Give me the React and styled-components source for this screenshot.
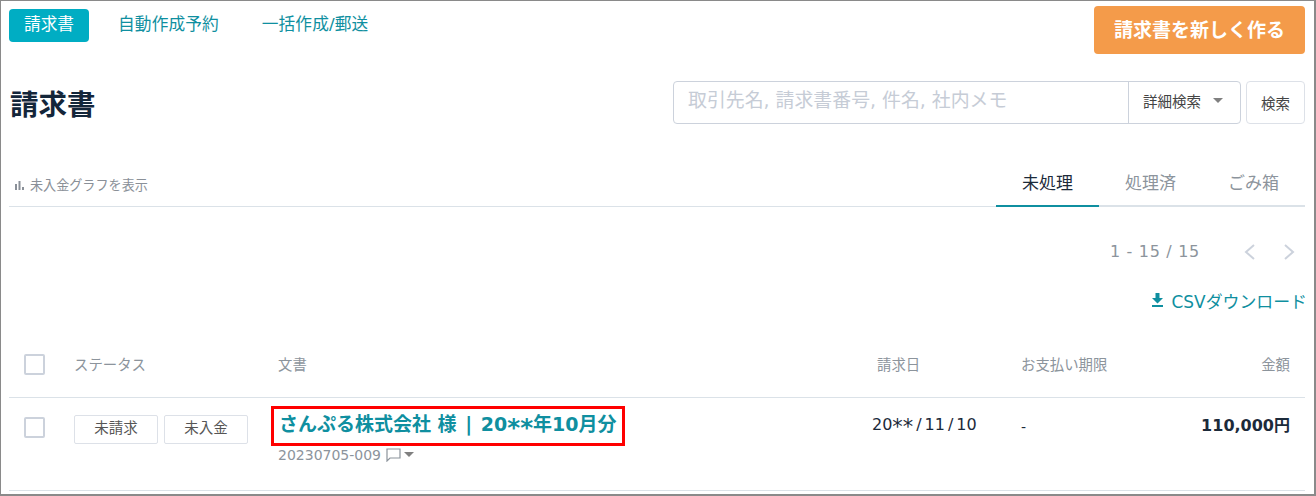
import React from "react";
import styled, { createGlobalStyle } from "styled-components";

const GlobalStyle = createGlobalStyle`
  html, body { margin: 0; padding: 0; background: #fff; }
  body { font-family: "DejaVu Sans", "Noto Sans CJK JP", sans-serif; color: #1c2a3a; }
  * { box-sizing: border-box; }
`;

const teal = "#0f8fa0";
const fontStack = `"DejaVu Sans", "Noto Sans CJK JP", sans-serif`;

const Frame = styled.div`
  width: 1316px;
  height: 496px;
  border: 1px solid #8a8a8a;
  border-width: 1px 2px 2px 1px;
  padding: 0 9px 0 8px;
  overflow: hidden;
`;

const TopBar = styled.div`
  display: flex;
  justify-content: space-between;
  align-items: flex-start;
  padding-top: 5px;
  height: 80px;
`;

const SubNav = styled.nav`
  display: flex;
  align-items: center;
  margin-top: 3px;
`;

const SubNavItem = styled.a`
  height: 33px;
  line-height: 30px;
  font-size: 16.7px;
  letter-spacing: ${(p) => (p.$active ? "0" : "0.1px")};
  border-radius: 4px;
  white-space: nowrap;
  padding: 0 ${(p) => (p.$active ? "15px" : "0")};
  margin-right: ${(p) => (p.$active ? "29px" : "43px")};
  color: ${(p) => (p.$active ? "#fff" : teal)};
  background: ${(p) => (p.$active ? "#00adc3" : "transparent")};
`;

const NewButton = styled.button`
  width: 211px;
  height: 48px;
  border: 0;
  border-radius: 4px;
  background: #f49b4a;
  color: #fff;
  font: bold 19px ${fontStack};
  padding: 0 0 4px;
`;

const TitleRow = styled.div`
  display: flex;
  justify-content: space-between;
  align-items: flex-start;
  height: 81px;
`;

const Title = styled.h1`
  margin: 0;
  padding: 3px 0 0 1px;
  font-size: 28.5px;
  line-height: 44px;
  font-weight: 700;
  color: #14263a;
`;

const SearchArea = styled.div`
  display: flex;
  gap: 5px;
`;

const SearchBox = styled.div`
  display: flex;
  width: 568px;
  height: 43px;
  border: 1px solid #ccd2dc;
  border-radius: 4px;
`;

const SearchHint = styled.div`
  flex: 1;
  padding-left: 14px;
  line-height: 37px;
  font-size: 18.9px;
  color: #c6ccd6;
  white-space: nowrap;
`;

const DetailSearch = styled.div`
  width: 112px;
  border-left: 1px solid #ccd2dc;
  display: flex;
  align-items: center;
  padding: 0 0 5px 14px;
  font-size: 14.5px;
  color: #444;
  white-space: nowrap;
`;

const Caret = styled.span`
  display: inline-block;
  border-left: ${(p) => p.$size}px solid transparent;
  border-right: ${(p) => p.$size}px solid transparent;
  border-top: ${(p) => p.$size}px solid #808080;
  margin-left: ${(p) => p.$gap}px;
`;

const SearchButton = styled.button`
  width: 59px;
  height: 43px;
  border: 1px solid #dde1e8;
  border-radius: 4px;
  background: #fff;
  color: #444;
  font: 14.5px ${fontStack};
  padding: 0;
`;

const TabRow = styled.div`
  display: flex;
  justify-content: space-between;
  align-items: flex-end;
  height: 45px;
  border-bottom: 1px solid #dbe2e8;
`;

const GraphToggle = styled.div`
  display: flex;
  align-items: center;
  gap: 5px;
  padding: 0 0 12px 6px;
  font-size: 13.1px;
  color: #8a9098;
`;

const Tabs = styled.div`
  display: flex;
  margin-bottom: -1px;
`;

const Tab = styled.div`
  width: ${(p) => p.$w}px;
  height: 45px;
  line-height: 42px;
  text-align: center;
  font-size: 17px;
  color: ${(p) => (p.$active ? "#1c2a3a" : "#8c949c")};
  border-bottom: 2px solid ${(p) => (p.$active ? teal : "#dbe2e8")};
`;

const Pager = styled.div`
  display: flex;
  justify-content: flex-end;
  align-items: center;
  height: 41px;
  margin-top: 24px;
  padding-right: 10px;
  gap: 27px;
  color: #8c949c;
  font-size: 16px;
`;

const PagerCount = styled.span`
  margin-right: 17px;
  letter-spacing: 0.7px;
`;

const CsvRow = styled.div`
  display: flex;
  justify-content: flex-end;
  align-items: center;
  gap: 8px;
  height: 34px;
  margin-top: 11px;
  margin-right: -2px;
  font-size: 16.9px;
  color: ${teal};
`;

const Row = styled.div`
  display: grid;
  grid-template-columns: 65px 204px 599px 144px 1fr 120px;
  border-bottom: 1px solid #dbe2e8;
  height: ${(p) => p.$h}px;
  align-items: ${(p) => (p.$head ? "center" : "start")};
  padding-top: ${(p) => (p.$head ? 14 : 0)}px;
`;

const HeadCell = styled.div`
  font-size: 14.4px;
  color: #8c949c;
  text-align: ${(p) => (p.$right ? "right" : "left")};
  padding-right: ${(p) => (p.$right ? 15 : 0)}px;
  white-space: nowrap;
  margin-top: -2px;
`;

const Check = styled.div`
  width: 21px;
  height: 21px;
  margin-left: 15px;
  border: 2px solid #ccd2dc;
  border-radius: 2px;
  background: #fff;
  margin-top: ${(p) => p.$top || 0}px;
`;

const Badges = styled.div`
  display: flex;
  gap: 6px;
  margin-top: 17px;
`;

const Badge = styled.span`
  width: 84px;
  height: 29px;
  border: 1px solid #dde1e8;
  border-radius: 2px;
  text-align: center;
  line-height: 25px;
  font-size: 14.5px;
  color: #555;
`;

const DocCell = styled.div`
  margin-left: -7px;
  margin-top: 8px;
`;

const DocTitle = styled.a`
  display: inline-block;
  height: 40px;
  border: 3px solid #f00;
  padding: 0 5px;
  line-height: 31px;
  font-size: 19px;
  font-weight: 700;
  color: ${teal};
  white-space: nowrap;
`;

// Latin marks run wider in the reference font than in DejaVu
const Wide = styled.span`
  padding: 0 ${(p) => p.$by}px;
`;

const Stars = styled.span`
  font-size: 1.3em;
  line-height: 0;
  vertical-align: -0.2em;
`;

const DocMeta = styled.div`
  display: flex;
  align-items: center;
  margin: 0 0 0 7px;
  height: 17px;
  font-size: 14px;
  color: #8c949c;
`;

const DateCell = styled.div`
  margin-top: 17px;
  font-size: 16px;
  line-height: 19px;
  margin-left: -5px;
  white-space: nowrap;
  color: #1c2a3a;
`;

const DueCell = styled.div`
  margin-top: 21px;
  font-size: 14px;
`;

const AmountCell = styled.div`
  margin-top: 14px;
  text-align: right;
  padding-right: 15px;
  font-size: 16px;
  font-weight: 700;
  white-space: nowrap;
`;

const ChevronIcon = ({ flip }) => (
  <svg width="12" height="16" viewBox="0 0 12 16" fill="none" stroke="#ccd2dc" strokeWidth="2">
    <path d={flip ? "M2 1l8 7-8 7" : "M10 1L2 8l8 7"} />
  </svg>
);

const BarsIcon = () => (
  <svg width="10" height="10" viewBox="0 0 10 10" fill="#8a9098">
    <rect x="0" y="4" width="2" height="6" />
    <rect x="3.5" y="1" width="2" height="9" />
    <rect x="7" y="7" width="2" height="3" />
  </svg>
);

const DownloadIcon = () => (
  <svg width="13" height="14" viewBox="0 0 13 14" fill={teal}>
    <path d="M4.5 0h4v5H12L6.5 10.5 1 5h3.5z" />
    <rect x="1" y="12" width="11" height="2" />
  </svg>
);

const CommentIcon = () => (
  <svg width="15" height="14" viewBox="0 0 15 14" fill="none" stroke="#8c949c" strokeWidth="1.2" style={{ marginLeft: 5 }}>
    <path d="M1 1h13v9H4l-3 3z" />
  </svg>
);

export default function App() {
  return (
    <Frame>
      <GlobalStyle />
      <TopBar>
        <SubNav>
          <SubNavItem $active>請求書</SubNavItem>
          <SubNavItem>自動作成予約</SubNavItem>
          <SubNavItem>一括作成/郵送</SubNavItem>
        </SubNav>
        <NewButton>請求書を新しく作る</NewButton>
      </TopBar>
      <TitleRow>
        <Title>請求書</Title>
        <SearchArea>
          <SearchBox>
            <SearchHint>取引先名, 請求書番号, 件名, 社内メモ</SearchHint>
            <DetailSearch>
              詳細検索
              <Caret $size={5} $gap={12} />
            </DetailSearch>
          </SearchBox>
          <SearchButton>検索</SearchButton>
        </SearchArea>
      </TitleRow>
      <TabRow>
        <GraphToggle>
          <BarsIcon />
          未入金グラフを表示
        </GraphToggle>
        <Tabs>
          <Tab $w={103} $active>未処理</Tab>
          <Tab $w={103}>処理済</Tab>
          <Tab $w={103}>ごみ箱</Tab>
        </Tabs>
      </TabRow>
      <Pager>
        <PagerCount>1 - 15 / 15</PagerCount>
        <ChevronIcon />
        <ChevronIcon flip />
      </Pager>
      <CsvRow>
        <DownloadIcon />
        CSVダウンロード
      </CsvRow>
      <Row $head $h={81}>
        <Check />
        <HeadCell>ステータス</HeadCell>
        <HeadCell>文書</HeadCell>
        <HeadCell>請求日</HeadCell>
        <HeadCell>お支払い期限</HeadCell>
        <HeadCell $right>金額</HeadCell>
      </Row>
      <Row $h={93}>
        <Check $top={19} />
        <Badges>
          <Badge>未請求</Badge>
          <Badge>未入金</Badge>
        </Badges>
        <DocCell>
          <DocTitle>さんぷる株式会社 様 <Wide $by={2}>|</Wide> 20<Stars>**</Stars>年10月分</DocTitle>
          <DocMeta>
            20230705-009
            <CommentIcon />
            <Caret $size={5} $gap={3} />
          </DocMeta>
        </DocCell>
        <DateCell>20<Stars>**</Stars><Wide $by={3}>/</Wide>11<Wide $by={3}>/</Wide>10</DateCell>
        <DueCell>-</DueCell>
        <AmountCell>110,000円</AmountCell>
      </Row>
    </Frame>
  );
}
